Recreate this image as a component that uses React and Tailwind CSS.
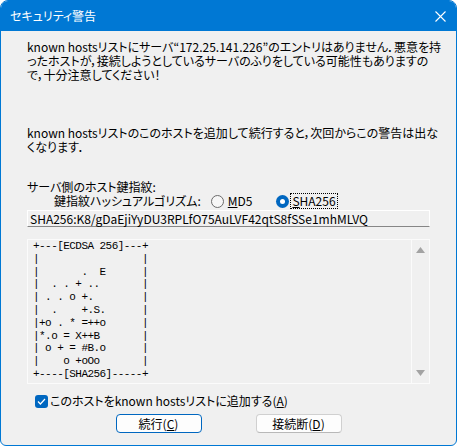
import React from "react";

const art = [
  "+---[ECDSA 256]---+",
  "|                 |",
  "|       .  E      |",
  "|  . . + ..       |",
  "| . . o +.        |",
  "|  .    +.S.      |",
  "|+o . * =++o      |",
  "|*.o = X++B       |",
  "| o + = #B.o      |",
  "|    o +oOo       |",
  "+----[SHA256]-----+",
];

function Radio({ checked }) {
  return checked ? (
    <span className="w-[13px] h-[13px] rounded-full bg-[#0067c0] flex items-center justify-center">
      <span className="w-[5px] h-[5px] rounded-full bg-white" />
    </span>
  ) : (
    <span className="w-[13px] h-[13px] rounded-full border border-[#6b6b6b] bg-[#f6f6f6]" />
  );
}

export default function App() {
  return (
    <div
      className="w-[457px] h-[446px] flex flex-col bg-[#f0f0f0] border border-[#0078d4] rounded-t-[8px] rounded-b-[6px] overflow-hidden text-[12px] text-black [font-feature-settings:'palt']"
      style={{ fontFamily: '"Noto Sans CJK JP", "Noto Sans", sans-serif' }}
    >
      {/* title bar */}
      <div className="h-[30px] shrink-0 bg-[#0078d4] flex items-center justify-between pl-[9px] pr-[10px] text-white">
        <span className="text-[12px]">セキュリティ警告</span>
        <svg width="11" height="11" viewBox="0 0 11 11">
          <path d="M0.5 0.5 L10.5 10.5 M10.5 0.5 L0.5 10.5" stroke="white" strokeWidth="1.1" />
        </svg>
      </div>

      <div className="flex-1 flex flex-col px-[26px]">
        <p className="mt-[9px] leading-[14px] whitespace-nowrap">
          known hostsリストにサーバ“172.25.141.226”のエントリはありません．悪意を持
          <br />
          ったホストが，接続しようとしているサーバのふりをしている可能性もありますの
          <br />
          で，十分注意してください！
        </p>

        <p className="mt-[44px] leading-[14px] whitespace-nowrap">
          known hostsリストのこのホストを追加して続行すると，次回からこの警告は出な
          <br />
          くなります．
        </p>

        <div className="mt-[26px] leading-[14px]">サーバ側のホスト鍵指紋:</div>

        <div className="flex items-center h-[14px] pl-[27px] leading-[14px]">
          <span>鍵指紋ハッシュアルゴリズム:</span>
          <span className="ml-[10px] flex items-center gap-[4px]">
            <Radio />
            <span>
              <span className="underline">M</span>D5
            </span>
          </span>
          <span className="ml-[24px] flex items-center gap-[1px]">
            <Radio checked />
            <span className="border border-dotted border-black px-[1px]">
              <span className="underline">S</span>HA256
            </span>
          </span>
        </div>

        <div className="mt-[2px] h-[17px] border border-white border-b-[#868686] flex items-center px-[2px] leading-[14px] whitespace-nowrap">
          SHA256:K8/gDaEjiYyDU3RPLfO75AuLVF42qtS8fSSe1mhMLVQ
        </div>

        <div className="mt-[12px] h-[145px] border border-[#fbfbfb] flex">
          <pre
            className="flex-1 pl-[5px] text-[11px] tracking-[-0.55px] leading-[12.8px] m-0"
            style={{ fontFamily: '"Liberation Mono", "DejaVu Sans Mono", monospace' }}
          >
            {art.join("\n")}
          </pre>
          <div className="w-[18px] border-l border-[#fbfbfb] flex flex-col items-center justify-between py-[7px]">
            <svg width="9" height="6" viewBox="0 0 9 6">
              <path d="M4.5 0 L9 6 L0 6 Z" fill="#a3a3a3" />
            </svg>
            <svg width="9" height="6" viewBox="0 0 9 6">
              <path d="M0 0 L9 0 L4.5 6 Z" fill="#a3a3a3" />
            </svg>
          </div>
        </div>

        <div className="mt-[10px] flex items-center gap-[2px] h-[14px] pl-[8px] leading-[14px]">
          <span className="w-[13px] h-[13px] rounded-[3px] bg-[#0067c0] flex items-center justify-center">
            <svg width="9" height="7" viewBox="0 0 9 7">
              <path d="M1 3.5 L3.4 6 L8 1" stroke="white" strokeWidth="1.2" fill="none" />
            </svg>
          </span>
          <span>
            このホストをknown hostsリストに追加する(<span className="underline">A</span>)
          </span>
        </div>

        <div className="mt-[6px] flex justify-center gap-[54px]">
          <button className="w-[86px] h-[19px] rounded-[4px] border border-[#0067c0] bg-[#fdfdfd] flex items-center justify-center leading-[14px]">
            続行(<span className="underline">C</span>)
          </button>
          <button className="w-[86px] h-[19px] rounded-[4px] border border-[#d0d0d0] border-b-[#b8b8b8] bg-[#fdfdfd] flex items-center justify-center leading-[14px]">
            接続断(<span className="underline">D</span>)
          </button>
        </div>
      </div>
    </div>
  );
}
